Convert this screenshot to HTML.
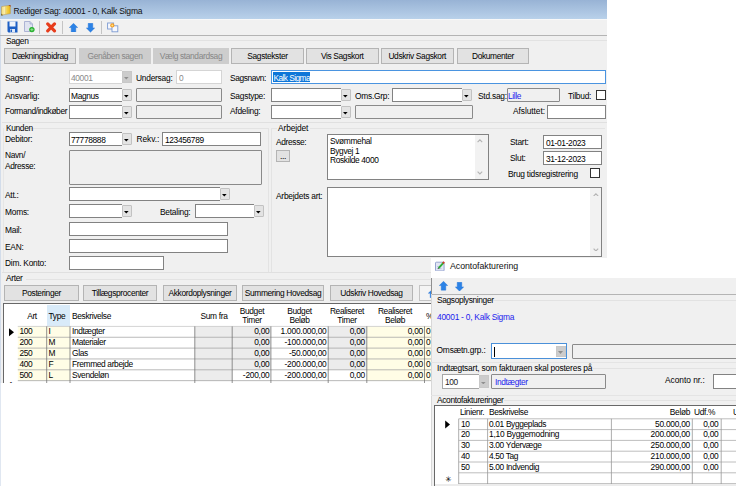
<!DOCTYPE html>
<html><head><meta charset="utf-8"><title>Rediger Sag</title>
<style>
html,body{margin:0;padding:0;background:#fff;}
body{width:736px;height:486px;position:relative;overflow:hidden;font-family:"Liberation Sans",sans-serif;font-size:8.4px;letter-spacing:-0.35px;color:#000;}
.a{position:absolute;}
.t{position:absolute;white-space:nowrap;line-height:10px;}
.tb{position:absolute;box-sizing:border-box;background:#fff;border:1px solid #828282;}
.ro{position:absolute;box-sizing:border-box;background:#f0f0f0;border:1px solid #8a8a8a;border-radius:1px;}
.cb{position:absolute;box-sizing:border-box;background:#e3e3e3;border:1px solid #c2c2c2;border-radius:1px;}
.cbd{position:absolute;box-sizing:border-box;background:#cccccc;border:1px solid #c8c8c8;}
.b{position:absolute;box-sizing:border-box;background:#e2e2e2;border:1px solid #b4b4b4;text-align:center;white-space:nowrap;}
.bd{position:absolute;box-sizing:border-box;background:#cdcdcd;text-align:center;white-space:nowrap;color:#868686;}
</style></head><body>

<div class="a" style="left:0px;top:383px;width:1px;height:103px;background:#e0e7f1;"></div>
<div class="a" id="main" style="left:0;top:0;width:607px;height:383px;background:#f0f0f0;overflow:hidden">
<div class="a" style="left:0px;top:0px;width:607px;height:19px;background:linear-gradient(#98b3d5,#b9d1ea);"></div>
<div class="a" style="left:0px;top:19px;width:1px;height:365px;background:#d2dcea;"></div>
<svg class="a" style="left:1px;top:4.5px" width="10" height="11" viewBox="0 0 10 11"><defs><linearGradient id="fg" x1="0" x2="1" y1="0" y2="0"><stop offset="0" stop-color="#f3dc7a"/><stop offset="0.45" stop-color="#fbf2b8"/><stop offset="0.6" stop-color="#f5d24a"/><stop offset="1" stop-color="#eab818"/></linearGradient></defs><path d="M0.6 1.6L4.6 0.9L9.2 0.4L9.4 8.6L5 9.3L0.4 10.2Z" fill="url(#fg)" stroke="#b8923a" stroke-width="0.5"/><path d="M4.7 1V9.2" stroke="#d8b84a" stroke-width="0.6"/><path d="M7.8 0.5L9.3 0.4L9.3 1.6" fill="none" stroke="#a0402a" stroke-width="0.8"/><path d="M0.4 8.8V10.2L1.8 10" fill="none" stroke="#6a5a2a" stroke-width="0.8"/></svg>
<span class="t" style="left:13.5px;top:5.6px;font-size:8.5px;color:#111;letter-spacing:-0.2px;">Rediger Sag: 40001 - 0, Kalk Sigma</span>
<div class="a" style="left:2px;top:19px;width:605px;height:16px;background:#f1f1f1;"></div>
<div class="a" style="left:0px;top:19px;width:607px;height:1px;background:#f8f8f8"></div>
<div class="a" style="left:0px;top:35px;width:607px;height:1px;background:#b4b4b4"></div>
<svg class="a" style="left:7px;top:21px" width="11" height="12" viewBox="0 0 11 12"><path d="M0.5 0.5H10.5V11.5H1.5L0.5 10.5Z" fill="#1d5fc4"/><rect x="2.5" y="0.5" width="6" height="5" fill="#eef3fb"/><rect x="3" y="8" width="5" height="3.5" fill="#dfe8f6"/><rect x="3.5" y="8.5" width="1.5" height="2.5" fill="#1d5fc4"/></svg>
<svg class="a" style="left:24px;top:21px" width="11" height="12" viewBox="0 0 11 12"><path d="M0.5 0.5H6L8.5 3V10.5H0.5Z" fill="#dfe3f0" stroke="#a6aed0" stroke-width="0.9"/><path d="M6 0.5V3H8.5" fill="#c8cee4" stroke="#a6aed0" stroke-width="0.8"/><circle cx="7.9" cy="8.6" r="2.7" fill="#27b02e"/><path d="M6.4 8.6H9.4M7.9 7.1V10.1" stroke="#8fe08f" stroke-width="1"/></svg>
<div class="a" style="left:39px;top:21px;width:1px;height:13px;background:#c4c4c4"></div>
<svg class="a" style="left:45px;top:21px" width="12" height="12" viewBox="0 0 12 12"><path d="M2.7 2.9L9.5 9.9M9.5 2.9L2.7 9.9" stroke="#e73d1c" stroke-width="3.1" stroke-linecap="round" fill="none"/></svg>
<div class="a" style="left:62px;top:21px;width:1px;height:13px;background:#c4c4c4"></div>
<svg class="a" style="left:69px;top:22.5px" width="9" height="9.5" viewBox="0 0 11 11" preserveAspectRatio="none"><path d="M5.5 0.4L10.6 5.2H8.3V10.6H2.7V5.2H0.4Z" fill="#2b82e6" stroke="#2270d4" stroke-width="0.5"/></svg>
<svg class="a" style="left:85.5px;top:23px" width="9" height="9.5" viewBox="0 0 11 11" preserveAspectRatio="none"><path d="M5.5 10.6L10.6 5.8H8.3V0.4H2.7V5.8H0.4Z" fill="#2b82e6" stroke="#2270d4" stroke-width="0.5"/></svg>
<div class="a" style="left:101px;top:21px;width:1px;height:13px;background:#c4c4c4"></div>
<svg class="a" style="left:106px;top:21px" width="13" height="12" viewBox="0 0 13 12"><rect x="1.6" y="2" width="6" height="6" fill="#f6f8fd" stroke="#7c9ad2" stroke-width="0.9"/><rect x="6" y="4.8" width="5.8" height="6" fill="#f6f8fd" stroke="#7c9ad2" stroke-width="0.9"/><circle cx="6.3" cy="4.4" r="2.1" fill="#f59a23"/><circle cx="6.3" cy="4.4" r="1" fill="#ffe680"/></svg>
<div class="a" style="left:28px;top:40px;width:579px;height:1px;background:#e2e2e2"></div>
<span class="t" style="left:6px;top:35.6px;">Sagen</span>
<div class="b" style="left:4px;top:48px;width:72px;height:16px;line-height:14px">Dækningsbidrag</div>
<div class="bd" style="left:79px;top:48px;width:72px;height:16px;line-height:16px">Genåben sagen</div>
<div class="bd" style="left:153px;top:48px;width:76px;height:16px;line-height:16px">Vælg standardsag</div>
<div class="b" style="left:231px;top:48px;width:73px;height:16px;line-height:14px">Sagstekster</div>
<div class="b" style="left:306px;top:48px;width:72.5px;height:16px;line-height:14px">Vis Sagskort</div>
<div class="b" style="left:381px;top:48px;width:72.5px;height:16px;line-height:14px">Udskriv Sagskort</div>
<div class="b" style="left:457px;top:48px;width:72px;height:16px;line-height:14px">Dokumenter</div>
<span class="t" style="left:5px;top:73.1px;letter-spacing:-0.26px;">Sagsnr.:</span>
<div class="tb" style="left:69px;top:70px;width:52.5px;height:14px;border-color:#d5d5d5;border-right:none;"></div>
<div class="cbd" style="left:121.5px;top:71px;width:10.5px;height:12px;"></div>
<svg class="a" style="left:124.45px;top:77.3px" width="4.6" height="2.4" viewBox="0 0 5 3" preserveAspectRatio="none"><path d="M0 0H5L2.5 3Z" fill="#8f8f8f"/></svg>
<span class="t" style="left:71px;top:73.1px;color:#8a8a8a;">40001</span>
<span class="t" style="left:136px;top:73.1px;letter-spacing:-0.24px;">Undersag:</span>
<div class="tb" style="left:176px;top:70px;width:46px;height:14px;border-color:#d5d5d5;"></div>
<span class="t" style="left:179px;top:73.1px;color:#8a8a8a;">0</span>
<span class="t" style="left:230px;top:73.1px;letter-spacing:-0.42px;">Sagsnavn:</span>
<div class="tb" style="left:271px;top:70px;width:335px;height:14px;border-color:#4a94e0;"></div>
<div class="a" style="left:273px;top:72px;width:37px;height:10px;background:#0d76d8;"></div>
<span class="t" style="left:273.5px;top:73.1px;color:#fff;font-size:8.3px;letter-spacing:-0.55px;">Kalk Sigma</span>
<span class="t" style="left:5px;top:90.8px;letter-spacing:-0.24px;">Ansvarlig:</span>
<div class="tb" style="left:69px;top:88px;width:52.5px;height:14px;border-right:none;"></div>
<div class="cb" style="left:121.5px;top:89px;width:10.5px;height:12px;"></div>
<svg class="a" style="left:124.45px;top:95.3px" width="4.6" height="2.4" viewBox="0 0 5 3" preserveAspectRatio="none"><path d="M0 0H5L2.5 3Z" fill="#000"/></svg>
<span class="t" style="left:71px;top:90.8px;">Magnus</span>
<div class="ro" style="left:136px;top:88px;width:86px;height:14px;"></div>
<span class="t" style="left:230px;top:90.8px;letter-spacing:-0.24px;">Sagstype:</span>
<div class="tb" style="left:271px;top:88px;width:69.5px;height:14px;border-right:none;"></div>
<div class="cb" style="left:340.5px;top:89px;width:10.5px;height:12px;"></div>
<svg class="a" style="left:343.45px;top:95.3px" width="4.6" height="2.4" viewBox="0 0 5 3" preserveAspectRatio="none"><path d="M0 0H5L2.5 3Z" fill="#000"/></svg>
<span class="t" style="left:355px;top:90.8px;letter-spacing:-0.24px;">Oms.Grp:</span>
<div class="tb" style="left:392px;top:88px;width:69.5px;height:14px;border-right:none;"></div>
<div class="cb" style="left:461.5px;top:89px;width:10.5px;height:12px;"></div>
<svg class="a" style="left:464.45px;top:95.3px" width="4.6" height="2.4" viewBox="0 0 5 3" preserveAspectRatio="none"><path d="M0 0H5L2.5 3Z" fill="#000"/></svg>
<span class="t" style="left:478px;top:90.8px;letter-spacing:-0.24px;">Std.sag:</span>
<div class="ro" style="left:507px;top:88px;width:53px;height:14px;"></div>
<span class="t" style="left:508px;top:90.8px;color:#1c1cee;">Lille</span>
<span class="t" style="left:568px;top:90.8px;letter-spacing:-0.24px;">Tilbud:</span>
<div class="tb" style="left:596px;top:90px;width:10px;height:10px;border-color:#333;"></div>
<span class="t" style="left:5px;top:106.1px;letter-spacing:-0.4px;">Formand/indkøber</span>
<div class="tb" style="left:69px;top:105px;width:52.5px;height:14px;border-right:none;"></div>
<div class="cb" style="left:121.5px;top:106px;width:10.5px;height:12px;"></div>
<svg class="a" style="left:124.45px;top:112.3px" width="4.6" height="2.4" viewBox="0 0 5 3" preserveAspectRatio="none"><path d="M0 0H5L2.5 3Z" fill="#000"/></svg>
<div class="ro" style="left:136px;top:105px;width:86px;height:14px;"></div>
<span class="t" style="left:230px;top:106.1px;letter-spacing:-0.24px;">Afdeling:</span>
<div class="tb" style="left:271px;top:105px;width:69.5px;height:14px;border-right:none;"></div>
<div class="cb" style="left:340.5px;top:106px;width:10.5px;height:12px;"></div>
<svg class="a" style="left:343.45px;top:112.3px" width="4.6" height="2.4" viewBox="0 0 5 3" preserveAspectRatio="none"><path d="M0 0H5L2.5 3Z" fill="#000"/></svg>
<div class="ro" style="left:355px;top:105px;width:118px;height:14px;"></div>
<span class="t" style="left:513px;top:106.1px;letter-spacing:-0.06px;">Afsluttet:</span>
<div class="tb" style="left:547px;top:105px;width:59px;height:14px;"></div>
<div class="a" style="left:2px;top:122px;width:605px;height:1px;background:#e0e0e0"></div>
<div class="a" style="left:30px;top:128px;width:238px;height:1px;background:#e3e3e3"></div>
<div class="a" style="left:3px;top:128px;width:1px;height:144px;background:#e6e6e6"></div>
<div class="a" style="left:268px;top:128px;width:1px;height:144px;background:#e3e3e3"></div>
<span class="t" style="left:6px;top:122.6px;">Kunden</span>
<span class="t" style="left:5px;top:134.4px;letter-spacing:-0.24px;">Debitor:</span>
<div class="tb" style="left:69px;top:132px;width:52.5px;height:14px;border-right:none;"></div>
<div class="cb" style="left:121.5px;top:133px;width:10.5px;height:12px;"></div>
<svg class="a" style="left:124.45px;top:139.3px" width="4.6" height="2.4" viewBox="0 0 5 3" preserveAspectRatio="none"><path d="M0 0H5L2.5 3Z" fill="#000"/></svg>
<span class="t" style="left:71px;top:134.6px;">77778888</span>
<span class="t" style="left:136.5px;top:134.1px;letter-spacing:-0.05px;">Rekv.:</span>
<div class="tb" style="left:162px;top:132px;width:99px;height:14px;"></div>
<span class="t" style="left:165px;top:134.6px;">123456789</span>
<span class="t" style="left:5px;top:149.6px;">Navn/</span>
<span class="t" style="left:5px;top:161.4px;letter-spacing:-0.35px;">Adresse:</span>
<div class="ro" style="left:69px;top:150px;width:193px;height:35px;"></div>
<span class="t" style="left:5px;top:189.7px;letter-spacing:-0.24px;">Att.:</span>
<div class="tb" style="left:69px;top:187px;width:150.5px;height:14px;border-right:none;"></div>
<div class="cb" style="left:219.5px;top:188px;width:10.5px;height:12px;"></div>
<svg class="a" style="left:222.45px;top:194.3px" width="4.6" height="2.4" viewBox="0 0 5 3" preserveAspectRatio="none"><path d="M0 0H5L2.5 3Z" fill="#000"/></svg>
<span class="t" style="left:5px;top:207.1px;letter-spacing:-0.24px;">Moms:</span>
<div class="tb" style="left:69px;top:204px;width:52.5px;height:14px;border-right:none;"></div>
<div class="cb" style="left:121.5px;top:205px;width:10.5px;height:12px;"></div>
<svg class="a" style="left:124.45px;top:211.3px" width="4.6" height="2.4" viewBox="0 0 5 3" preserveAspectRatio="none"><path d="M0 0H5L2.5 3Z" fill="#000"/></svg>
<span class="t" style="left:160px;top:207.1px;letter-spacing:-0.24px;">Betaling:</span>
<div class="tb" style="left:195px;top:204px;width:58.5px;height:14px;border-right:none;"></div>
<div class="cb" style="left:253.5px;top:205px;width:10.5px;height:12px;"></div>
<svg class="a" style="left:256.45px;top:211.3px" width="4.6" height="2.4" viewBox="0 0 5 3" preserveAspectRatio="none"><path d="M0 0H5L2.5 3Z" fill="#000"/></svg>
<span class="t" style="left:5px;top:224.6px;letter-spacing:-0.24px;">Mail:</span>
<div class="tb" style="left:69px;top:222px;width:159px;height:14px;"></div>
<span class="t" style="left:5px;top:241.6px;letter-spacing:-0.24px;">EAN:</span>
<div class="tb" style="left:69px;top:239px;width:159px;height:14px;"></div>
<span class="t" style="left:5px;top:258.1px;letter-spacing:-0.24px;">Dim. Konto:</span>
<div class="tb" style="left:69px;top:256px;width:95px;height:14px;"></div>
<div class="a" style="left:271px;top:128px;width:6px;height:1px;background:#e3e3e3"></div>
<div class="a" style="left:310px;top:128px;width:295px;height:1px;background:#e3e3e3"></div>
<div class="a" style="left:271px;top:128px;width:1px;height:144px;background:#e3e3e3"></div>
<span class="t" style="left:278px;top:122.6px;letter-spacing:-0.12px;">Arbejdet</span>
<span class="t" style="left:276px;top:137.4px;letter-spacing:-0.35px;">Adresse:</span>
<div class="b" style="left:276px;top:150px;width:14px;height:12px;line-height:10px">...</div>
<div class="tb" style="left:327px;top:134px;width:162px;height:46px;"></div>
<span class="t" style="left:330px;top:136.4px;">Svømmehal</span>
<span class="t" style="left:330px;top:145.9px;">Bygvej 1</span>
<span class="t" style="left:330px;top:155.4px;">Roskilde 4000</span>
<div class="a" style="left:474.5px;top:135px;width:13.5px;height:44px;background:#f2f2f2;"></div>
<svg class="a" style="left:477.4px;top:139.1px" width="5.8" height="3.8" viewBox="0 0 5.8 3.8"><path d="M0.6 3.1L2.9 0.8L5.2 3.1" fill="none" stroke="#b4b4b4" stroke-width="1.15"/></svg>
<svg class="a" style="left:477.4px;top:170.8px" width="5.8" height="3.8" viewBox="0 0 5.8 3.8"><path d="M0.6 0.7L2.9 3L5.2 0.7" fill="none" stroke="#b4b4b4" stroke-width="1.15"/></svg>
<span class="t" style="left:510px;top:137.4px;letter-spacing:-0.24px;">Start:</span>
<div class="tb" style="left:543px;top:135px;width:59px;height:14px;"></div>
<span class="t" style="left:546px;top:137.6px;">01-01-2023</span>
<span class="t" style="left:510px;top:153.4px;letter-spacing:-0.24px;">Slut:</span>
<div class="tb" style="left:543px;top:151px;width:59px;height:14px;"></div>
<span class="t" style="left:546px;top:153.6px;">31-12-2023</span>
<span class="t" style="left:508px;top:168.6px;letter-spacing:-0.24px;">Brug tidsregistrering</span>
<div class="tb" style="left:590px;top:168px;width:10px;height:10px;border-color:#333;"></div>
<span class="t" style="left:276px;top:191.4px;letter-spacing:-0.24px;">Arbejdets art:</span>
<div class="tb" style="left:327px;top:187px;width:275px;height:70px;"></div>
<div class="a" style="left:589.5px;top:188px;width:11.5px;height:68px;background:#f2f2f2;"></div>
<svg class="a" style="left:593.4px;top:192.5px" width="5.8" height="3.8" viewBox="0 0 5.8 3.8"><path d="M0.6 3.1L2.9 0.8L5.2 3.1" fill="none" stroke="#b4b4b4" stroke-width="1.15"/></svg>
<svg class="a" style="left:593.4px;top:247.7px" width="5.8" height="3.8" viewBox="0 0 5.8 3.8"><path d="M0.6 0.7L2.9 3L5.2 0.7" fill="none" stroke="#b4b4b4" stroke-width="1.15"/></svg>
<div class="a" style="left:2px;top:272px;width:605px;height:1px;background:#e0e0e0"></div>
<div class="a" style="left:26px;top:279px;width:581px;height:1px;background:#e3e3e3"></div>
<span class="t" style="left:6px;top:273.1px;">Arter</span>
<div class="b" style="left:4px;top:285px;width:75px;height:16px;line-height:14px">Posteringer</div>
<div class="b" style="left:83px;top:285px;width:74px;height:16px;line-height:14px">Tillægsprocenter</div>
<div class="b" style="left:163px;top:285px;width:74px;height:16px;line-height:14px">Akkordoplysninger</div>
<div class="b" style="left:242px;top:285px;width:82px;height:16px;line-height:14px">Summering Hovedsag</div>
<div class="b" style="left:330px;top:285px;width:83px;height:16px;line-height:14px">Udskriv Hovedsag</div>
<div class="b" style="left:419px;top:285px;width:40px;height:16px;background:#f4f4f4;border-color:#c4c4c4"></div>
<svg class="a" style="left:427.5px;top:288.5px" width="9" height="9" viewBox="0 0 11 11" preserveAspectRatio="none"><path d="M5.5 0.4L10.6 5.2H8.3V10.6H2.7V5.2H0.4Z" fill="#2b82e6" stroke="#2270d4" stroke-width="0.5"/></svg>
<div class="a" style="left:3px;top:303px;width:610px;height:90px;background:#fff;border:1px solid #686868;box-sizing:border-box;"></div>
<div class="a" style="left:47px;top:304.5px;width:23px;height:22px;background:#d9ebf9;"></div>
<span class="t" style="left:18px;top:310.5px;width:28px;text-align:center;">Art</span>
<span class="t" style="left:48.5px;top:310.5px;">Type</span>
<span class="t" style="left:72px;top:310.5px;">Beskrivelse</span>
<span class="t" style="left:195px;top:310.5px;width:38px;text-align:center;">Sum fra</span>
<span class="t" style="left:233px;top:306.0px;width:38px;text-align:center;">Budget</span>
<span class="t" style="left:233px;top:314.7px;width:38px;text-align:center;">Timer</span>
<span class="t" style="left:271px;top:306.0px;width:57px;text-align:center;">Budget</span>
<span class="t" style="left:271px;top:314.7px;width:57px;text-align:center;">Beløb</span>
<span class="t" style="left:328px;top:306.0px;width:38px;text-align:center;">Realiseret</span>
<span class="t" style="left:328px;top:314.7px;width:38px;text-align:center;">Timer</span>
<span class="t" style="left:366px;top:306.0px;width:58px;text-align:center;">Realiseret</span>
<span class="t" style="left:366px;top:314.7px;width:58px;text-align:center;">Beløb</span>
<span class="t" style="left:426px;top:310.5px;">%</span>
<svg class="a" style="left:0;top:0" width="607" height="384" viewBox="0 0 607 384"><rect x="17.80" y="326.40" width="52.20" height="54.25" fill="#fffde6"/><rect x="194.80" y="326.40" width="37.40" height="54.25" fill="#ececec"/><rect x="232.20" y="326.40" width="38.70" height="43.40" fill="#ececec"/><rect x="328.20" y="326.40" width="38.60" height="43.40" fill="#ececec"/><rect x="366.80" y="326.40" width="64.70" height="54.25" fill="#fffde6"/><path d="M17.8 326.40H607" stroke="#c4c4c4" stroke-width="0.75"/><path d="M17.8 337.25H607" stroke="#a2a2a2" stroke-width="0.75"/><path d="M17.8 348.10H607" stroke="#a2a2a2" stroke-width="0.75"/><path d="M17.8 358.95H607" stroke="#a2a2a2" stroke-width="0.75"/><path d="M17.8 369.80H607" stroke="#a2a2a2" stroke-width="0.75"/><path d="M17.8 380.65H607" stroke="#a2a2a2" stroke-width="0.75"/><path d="M46.7 326.40V384" stroke="#747474" stroke-width="0.8"/><path d="M70 326.40V384" stroke="#747474" stroke-width="0.8"/><path d="M194.8 326.40V384" stroke="#747474" stroke-width="0.8"/><path d="M232.2 326.40V384" stroke="#747474" stroke-width="0.8"/><path d="M270.9 326.40V384" stroke="#747474" stroke-width="0.8"/><path d="M328.2 326.40V384" stroke="#747474" stroke-width="0.8"/><path d="M366.8 326.40V384" stroke="#747474" stroke-width="0.8"/><path d="M424.5 326.40V384" stroke="#747474" stroke-width="0.8"/><path d="M9 328.2L14 332.2L9 336.2Z" fill="#000"/></svg>
<span class="t" style="left:19.5px;top:326.4px;">100</span>
<span class="t" style="left:48.5px;top:326.4px;">I</span>
<span class="t" style="left:72px;top:326.4px;">Indtægter</span>
<span class="t" style="left:233px;top:326.4px;width:36.5px;text-align:right;letter-spacing:-0.25px;">0,00</span>
<span class="t" style="left:271px;top:326.4px;width:55.5px;text-align:right;letter-spacing:-0.25px;">1.000.000,00</span>
<span class="t" style="left:328px;top:326.4px;width:37px;text-align:right;letter-spacing:-0.25px;">0,00</span>
<span class="t" style="left:366px;top:326.4px;width:57px;text-align:right;letter-spacing:-0.25px;">0,00</span>
<span class="t" style="left:426px;top:326.4px;">0</span>
<span class="t" style="left:19.5px;top:337.2px;">200</span>
<span class="t" style="left:48.5px;top:337.2px;">M</span>
<span class="t" style="left:72px;top:337.2px;">Materialer</span>
<span class="t" style="left:233px;top:337.2px;width:36.5px;text-align:right;letter-spacing:-0.25px;">0,00</span>
<span class="t" style="left:271px;top:337.2px;width:55.5px;text-align:right;letter-spacing:-0.25px;">-100.000,00</span>
<span class="t" style="left:328px;top:337.2px;width:37px;text-align:right;letter-spacing:-0.25px;">0,00</span>
<span class="t" style="left:366px;top:337.2px;width:57px;text-align:right;letter-spacing:-0.25px;">0,00</span>
<span class="t" style="left:426px;top:337.2px;">0</span>
<span class="t" style="left:19.5px;top:348.1px;">250</span>
<span class="t" style="left:48.5px;top:348.1px;">M</span>
<span class="t" style="left:72px;top:348.1px;">Glas</span>
<span class="t" style="left:233px;top:348.1px;width:36.5px;text-align:right;letter-spacing:-0.25px;">0,00</span>
<span class="t" style="left:271px;top:348.1px;width:55.5px;text-align:right;letter-spacing:-0.25px;">-50.000,00</span>
<span class="t" style="left:328px;top:348.1px;width:37px;text-align:right;letter-spacing:-0.25px;">0,00</span>
<span class="t" style="left:366px;top:348.1px;width:57px;text-align:right;letter-spacing:-0.25px;">0,00</span>
<span class="t" style="left:426px;top:348.1px;">0</span>
<span class="t" style="left:19.5px;top:358.9px;">400</span>
<span class="t" style="left:48.5px;top:358.9px;">F</span>
<span class="t" style="left:72px;top:358.9px;">Fremmed arbejde</span>
<span class="t" style="left:233px;top:358.9px;width:36.5px;text-align:right;letter-spacing:-0.25px;">0,00</span>
<span class="t" style="left:271px;top:358.9px;width:55.5px;text-align:right;letter-spacing:-0.25px;">-200.000,00</span>
<span class="t" style="left:328px;top:358.9px;width:37px;text-align:right;letter-spacing:-0.25px;">0,00</span>
<span class="t" style="left:366px;top:358.9px;width:57px;text-align:right;letter-spacing:-0.25px;">0,00</span>
<span class="t" style="left:426px;top:358.9px;">0</span>
<span class="t" style="left:19.5px;top:369.8px;">500</span>
<span class="t" style="left:48.5px;top:369.8px;">L</span>
<span class="t" style="left:72px;top:369.8px;">Svendeløn</span>
<span class="t" style="left:233px;top:369.8px;width:36.5px;text-align:right;letter-spacing:-0.25px;">-200,00</span>
<span class="t" style="left:271px;top:369.8px;width:55.5px;text-align:right;letter-spacing:-0.25px;">-200.000,00</span>
<span class="t" style="left:328px;top:369.8px;width:37px;text-align:right;letter-spacing:-0.25px;">0,00</span>
<span class="t" style="left:366px;top:369.8px;width:57px;text-align:right;letter-spacing:-0.25px;">0,00</span>
<span class="t" style="left:426px;top:369.8px;">0</span>
<span class="t" style="left:7.5px;top:380.1px;font-size:7px;">✱</span>
</div>
<div class="a" id="ac" style="left:431px;top:258px;width:305px;height:228px;background:#f0f0f0;overflow:hidden">
<div class="a" style="left:0px;top:-1px;width:305px;height:21px;background:#fff;"></div>
<svg class="a" style="left:4px;top:2.5px" width="10.5" height="10.5" viewBox="0 0 10.5 10.5"><rect x="0.5" y="1.2" width="8.6" height="8.8" rx="0.8" fill="#e2e6f4" stroke="#8c9ccc" stroke-width="0.9"/><path d="M2 7.6H6.5M2 5.6H4" stroke="#aab4d8" stroke-width="0.7"/><path d="M3.6 7.2L8.6 1.6" stroke="#2fae36" stroke-width="1.9"/><path d="M7.9 2.3L9.2 0.9" stroke="#d8382a" stroke-width="1.9"/><path d="M3 8L3.9 6.8" stroke="#5a5a5a" stroke-width="1"/></svg>
<span class="t" style="left:19px;top:3.3px;font-size:8.8px;color:#111;letter-spacing:-0.05px;">Acontofakturering</span>
<div class="a" style="left:0px;top:20px;width:305px;height:16px;background:#f0f0f0;"></div>
<div class="a" style="left:0px;top:36px;width:305px;height:1px;background:#b4b4b4"></div>
<div class="a" style="left:0px;top:20px;width:1px;height:16px;background:#909090"></div>
<div class="a" style="left:0px;top:36px;width:1px;height:192px;background:#d8d8d8"></div>
<svg class="a" style="left:7.5px;top:23px" width="9" height="9.5" viewBox="0 0 11 11" preserveAspectRatio="none"><path d="M5.5 0.4L10.6 5.2H8.3V10.6H2.7V5.2H0.4Z" fill="#2b82e6" stroke="#2270d4" stroke-width="0.5"/></svg>
<svg class="a" style="left:24px;top:23.5px" width="9" height="9.5" viewBox="0 0 11 11" preserveAspectRatio="none"><path d="M5.5 10.6L10.6 5.8H8.3V0.4H2.7V5.8H0.4Z" fill="#2b82e6" stroke="#2270d4" stroke-width="0.5"/></svg>
<div class="a" style="left:55px;top:42px;width:250px;height:1px;background:#e2e2e2"></div>
<span class="t" style="left:6px;top:36.7px;">Sagsoplysninger</span>
<span class="t" style="left:6px;top:54.1px;color:#1c1cee;letter-spacing:-0.25px;">40001 - 0, Kalk Sigma</span>
<span class="t" style="left:5.5px;top:87.1px;letter-spacing:-0.18px;">Omsætn.grp.:</span>
<div class="tb" style="left:60px;top:85px;width:76px;height:16px;border-color:#4a90d9;"></div>
<div class="cbd" style="left:124.5px;top:88px;width:10px;height:11px;"></div>
<svg class="a" style="left:127px;top:92.5px" width="5" height="3" viewBox="0 0 5 3"><path d="M0 0H5L2.5 3Z" fill="#8f8f8f"/></svg>
<div class="a" style="left:63px;top:88.5px;width:1px;height:10px;background:#000;"></div>
<div class="ro" style="left:141px;top:86px;width:170px;height:15px;"></div>
<div class="a" style="left:0px;top:104px;width:305px;height:1px;background:#e4e4e4"></div>
<div class="a" style="left:162px;top:110px;width:143px;height:1px;background:#e2e2e2"></div>
<span class="t" style="left:6px;top:105.1px;letter-spacing:-0.19px;">Indtægtsart, som fakturaen skal posteres på</span>
<div class="tb" style="left:11px;top:116px;width:36.5px;height:15px;border-color:#a6a6a6;border-right:none;"></div>
<div class="cbd" style="left:47.5px;top:117px;width:10.5px;height:13px;"></div>
<svg class="a" style="left:50.45px;top:123.8px" width="4.6" height="2.4" viewBox="0 0 5 3" preserveAspectRatio="none"><path d="M0 0H5L2.5 3Z" fill="#8f8f8f"/></svg>
<span class="t" style="left:14px;top:118.7px;color:#222;">100</span>
<div class="ro" style="left:60px;top:116px;width:115px;height:15px;"></div>
<span class="t" style="left:64px;top:118.7px;color:#1c1cee;">Indtægter</span>
<span class="t" style="left:234px;top:116.5px;letter-spacing:-0.03px;">Aconto nr.:</span>
<div class="tb" style="left:282px;top:116px;width:30px;height:15px;"></div>
<div class="a" style="left:0px;top:137px;width:305px;height:1px;background:#e4e4e4"></div>
<div class="a" style="left:73px;top:142px;width:232px;height:1px;background:#e2e2e2"></div>
<span class="t" style="left:6px;top:136.7px;">Acontofaktureringer</span>
<div class="a" style="left:3px;top:147px;width:310px;height:90px;background:#fff;border:1px solid #686868;box-sizing:border-box;"></div>
<span class="t" style="left:29px;top:149.4px;">Linienr.</span>
<span class="t" style="left:58px;top:149.4px;">Beskrivelse</span>
<span class="t" style="left:181px;top:149.4px;width:78px;text-align:right;">Beløb</span>
<span class="t" style="left:263px;top:149.4px;">Udf.%</span>
<span class="t" style="left:302px;top:149.4px;">U</span>
<svg class="a" style="left:0;top:0" width="305" height="228" viewBox="431 258 305 228"><path d="M458.7 418.80H736" stroke="#a8a8a8" stroke-width="0.75"/><path d="M458.7 429.60H736" stroke="#a8a8a8" stroke-width="0.75"/><path d="M458.7 440.40H736" stroke="#a8a8a8" stroke-width="0.75"/><path d="M458.7 451.20H736" stroke="#a8a8a8" stroke-width="0.75"/><path d="M458.7 462.00H736" stroke="#a8a8a8" stroke-width="0.75"/><path d="M458.7 472.80H736" stroke="#a8a8a8" stroke-width="0.75"/><path d="M458.7 483.60H736" stroke="#a8a8a8" stroke-width="0.75"/><path d="M458.7 418.80V486" stroke="#989898" stroke-width="0.8"/><path d="M487.6 418.80V486" stroke="#989898" stroke-width="0.8"/><path d="M611.4 418.80V486" stroke="#989898" stroke-width="0.8"/><path d="M692.3 418.80V486" stroke="#989898" stroke-width="0.8"/><path d="M721.2 418.80V486" stroke="#989898" stroke-width="0.8"/><path d="M445.2 420.6L450 424.6L445.2 428.6Z" fill="#000"/></svg>
<span class="t" style="left:30px;top:160.5px;">10</span>
<span class="t" style="left:58px;top:160.5px;">0.01 Byggeplads</span>
<span class="t" style="left:181px;top:160.5px;width:78px;text-align:right;letter-spacing:-0.25px;">50.000,00</span>
<span class="t" style="left:261px;top:160.5px;width:26.5px;text-align:right;letter-spacing:-0.25px;">0,00</span>
<span class="t" style="left:30px;top:171.3px;">20</span>
<span class="t" style="left:58px;top:171.3px;letter-spacing:-0.25px;">1,10 Byggemodning</span>
<span class="t" style="left:181px;top:171.3px;width:78px;text-align:right;letter-spacing:-0.25px;">200.000,00</span>
<span class="t" style="left:261px;top:171.3px;width:26.5px;text-align:right;letter-spacing:-0.25px;">0,00</span>
<span class="t" style="left:30px;top:182.1px;">30</span>
<span class="t" style="left:58px;top:182.1px;">3.00 Ydervæge</span>
<span class="t" style="left:181px;top:182.1px;width:78px;text-align:right;letter-spacing:-0.25px;">250.000,00</span>
<span class="t" style="left:261px;top:182.1px;width:26.5px;text-align:right;letter-spacing:-0.25px;">0,00</span>
<span class="t" style="left:30px;top:192.9px;">40</span>
<span class="t" style="left:58px;top:192.9px;">4.50 Tag</span>
<span class="t" style="left:181px;top:192.9px;width:78px;text-align:right;letter-spacing:-0.25px;">210.000,00</span>
<span class="t" style="left:261px;top:192.9px;width:26.5px;text-align:right;letter-spacing:-0.25px;">0,00</span>
<span class="t" style="left:30px;top:203.7px;">50</span>
<span class="t" style="left:58px;top:203.7px;">5.00 Indvendig</span>
<span class="t" style="left:181px;top:203.7px;width:78px;text-align:right;letter-spacing:-0.25px;">290.000,00</span>
<span class="t" style="left:261px;top:203.7px;width:26.5px;text-align:right;letter-spacing:-0.25px;">0,00</span>
<div class="a" style="left:4px;top:226px;width:301px;height:2px;background:#ececec;"></div>
<span class="t" style="left:13.600000000000023px;top:216.6px;font-size:7.5px;letter-spacing:0;">✳</span>
</div>
</body></html>
